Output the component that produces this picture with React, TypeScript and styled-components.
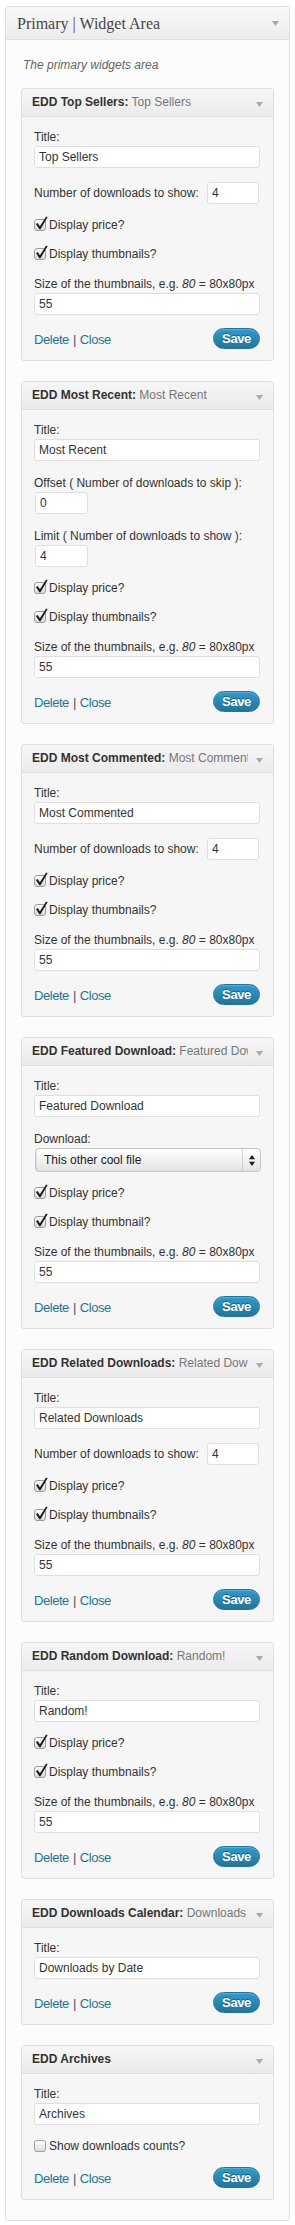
import React from "react";
import styled, { createGlobalStyle } from "styled-components";

const GlobalStyle = createGlobalStyle`
  html, body { margin: 0; padding: 0; background: #ffffff; }
  body {
    font-family: "Liberation Sans", Arial, Helvetica, sans-serif;
    font-size: 12px;
    color: #333333;
  }
  * { box-sizing: border-box; }
`;

type FieldDef =
  | { kind: "text"; label: string; value: string }
  | { kind: "inline"; label: string; value: string }
  | { kind: "small"; label: string; value: string }
  | { kind: "select"; label: string; value: string }
  | { kind: "check"; label: string; checked: boolean }
  | { kind: "size"; value: string };

interface WidgetDef {
  name: string;
  title?: string;
  fields: FieldDef[];
}

const widgets: WidgetDef[] = [
  {
    name: "EDD Top Sellers",
    title: "Top Sellers",
    fields: [
      { kind: "text", label: "Title:", value: "Top Sellers" },
      { kind: "inline", label: "Number of downloads to show:", value: "4" },
      { kind: "check", label: "Display price?", checked: true },
      { kind: "check", label: "Display thumbnails?", checked: true },
      { kind: "size", value: "55" },
    ],
  },
  {
    name: "EDD Most Recent",
    title: "Most Recent",
    fields: [
      { kind: "text", label: "Title:", value: "Most Recent" },
      { kind: "small", label: "Offset ( Number of downloads to skip ):", value: "0" },
      { kind: "small", label: "Limit ( Number of downloads to show ):", value: "4" },
      { kind: "check", label: "Display price?", checked: true },
      { kind: "check", label: "Display thumbnails?", checked: true },
      { kind: "size", value: "55" },
    ],
  },
  {
    name: "EDD Most Commented",
    title: "Most Commented",
    fields: [
      { kind: "text", label: "Title:", value: "Most Commented" },
      { kind: "inline", label: "Number of downloads to show:", value: "4" },
      { kind: "check", label: "Display price?", checked: true },
      { kind: "check", label: "Display thumbnails?", checked: true },
      { kind: "size", value: "55" },
    ],
  },
  {
    name: "EDD Featured Download",
    title: "Featured Download",
    fields: [
      { kind: "text", label: "Title:", value: "Featured Download" },
      { kind: "select", label: "Download:", value: "This other cool file" },
      { kind: "check", label: "Display price?", checked: true },
      { kind: "check", label: "Display thumbnail?", checked: true },
      { kind: "size", value: "55" },
    ],
  },
  {
    name: "EDD Related Downloads",
    title: "Related Downloads",
    fields: [
      { kind: "text", label: "Title:", value: "Related Downloads" },
      { kind: "inline", label: "Number of downloads to show:", value: "4" },
      { kind: "check", label: "Display price?", checked: true },
      { kind: "check", label: "Display thumbnails?", checked: true },
      { kind: "size", value: "55" },
    ],
  },
  {
    name: "EDD Random Download",
    title: "Random!",
    fields: [
      { kind: "text", label: "Title:", value: "Random!" },
      { kind: "check", label: "Display price?", checked: true },
      { kind: "check", label: "Display thumbnails?", checked: true },
      { kind: "size", value: "55" },
    ],
  },
  {
    name: "EDD Downloads Calendar",
    title: "Downloads by Date",
    fields: [{ kind: "text", label: "Title:", value: "Downloads by Date" }],
  },
  {
    name: "EDD Archives",
    fields: [
      { kind: "text", label: "Title:", value: "Archives" },
      { kind: "check", label: "Show downloads counts?", checked: false },
    ],
  },
];

/* ---------- layout ---------- */

const Page = styled.div`
  padding: 6px 5px 5px 5px;
`;

const Panel = styled.section`
  border: 1px solid #dfdfdf;
  border-radius: 3px;
  background: #fcfcfc;
  overflow: hidden;
`;

const PanelHeader = styled.div`
  height: 33px;
  display: flex;
  align-items: center;
  justify-content: space-between;
  padding: 0 10px 0 11px;
  border-bottom: 1px solid #dfdfdf;
  background: linear-gradient(to bottom, #f9f9f9, #ececec);
`;

const PanelTitle = styled.h3`
  margin: 0;
  padding-top: 1px;
  font-family: "Liberation Serif", "Times New Roman", serif;
  font-weight: normal;
  font-size: 16px;
  line-height: 31px;
  color: #464646;
`;

const PanelBody = styled.div`
  padding: 17px 15px 20px 15px;
`;

const Description = styled.p`
  margin: 0 0 15px 2px;
  font-style: italic;
  font-size: 12px;
  line-height: 16px;
  color: #666666;
`;

const WidgetList = styled.div`
  display: flex;
  flex-direction: column;
  gap: 20px;
`;

const Widget = styled.div`
  border: 1px solid #dfdfdf;
  border-radius: 3px;
  background: #f6f6f6;
  overflow: hidden;
`;

const WidgetTop = styled.div`
  height: 28px;
  display: flex;
  align-items: center;
  padding: 0 10px 0 10px;
  border-bottom: 1px solid #dfdfdf;
  background: linear-gradient(to bottom, #f6f6f6, #ebebeb);
`;

const WidgetTitle = styled.h4`
  flex: 1;
  min-width: 0;
  margin: 0;
  overflow: hidden;
  white-space: nowrap;
  font-size: 12px;
  line-height: 27px;
  font-weight: bold;
  color: #333333;
`;

const InTitle = styled.span`
  font-weight: normal;
  color: #777777;
`;

const ToggleArrow = styled.svg<{ $offset: number }>`
  flex: none;
  margin-left: 8px;
  margin-top: ${(p) => p.$offset}px;
`;

const WidgetInside = styled.div`
  display: flex;
  flex-direction: column;
  gap: 13px;
  padding: 11px 13px 11px 12px;
`;

const Field = styled.div`
  display: flex;
  flex-direction: column;
  align-items: flex-start;
`;

const Label = styled.label`
  display: block;
  line-height: 18px;
  white-space: nowrap;
  color: #333333;
`;

const TextInput = styled.input<{ $width?: number; $indent?: number }>`
  display: block;
  width: ${(p) => (p.$width ? `${p.$width}px` : "100%")};
  margin-left: ${(p) => p.$indent ?? 0}px;
  height: 22px;
  padding: 0 4px;
  border: 1px solid #dfdfdf;
  border-radius: 3px;
  background: #ffffff;
  font-family: inherit;
  font-size: 12px;
  color: #333333;
  outline: none;
`;

const InlineRow = styled.div`
  height: 23px;
  display: flex;
  align-items: center;
  justify-content: space-between;
  padding-right: 1px;
`;

const CheckRow = styled.label`
  height: 16px;
  display: flex;
  align-items: center;
  color: #333333;
  line-height: 16px;
`;

const CheckSvg = styled.svg`
  flex: none;
  overflow: visible;
`;

const SelectBox = styled.div`
  width: 226px;
  height: 24px;
  margin-left: 1px;
  display: flex;
  align-items: stretch;
  border: 1px solid #c6c6c6;
  border-radius: 4px;
  background: linear-gradient(to bottom, #ffffff 0%, #f3f3f3 45%, #e3e3e3 100%);
  box-shadow: inset 1px 0 1px rgba(0, 0, 0, 0.08);
`;

const SelectText = styled.span`
  flex: 1;
  padding-left: 8px;
  line-height: 22px;
  color: #222222;
`;

const SelectArrows = styled.span`
  flex: none;
  width: 18px;
  display: flex;
  align-items: center;
  justify-content: center;
  border-left: 1px solid #d0d0d0;
`;

const Footer = styled.div`
  display: flex;
  justify-content: space-between;
  align-items: flex-start;
`;

const Links = styled.div`
  padding-top: 4px;
  font-size: 13px;
  line-height: 16px;
  letter-spacing: -0.45px;
  color: #333333;
`;

const Link = styled.a`
  color: #21759b;
  text-decoration: none;
`;

const Sep = styled.span`
  margin: 0 4px;
  color: #555555;
`;

const SaveButton = styled.button`
  width: 47px;
  height: 21px;
  padding: 0;
  border: 1px solid #21759b;
  border-radius: 11px;
  background: linear-gradient(to bottom, #2e9bcd, #21759b);
  color: #ffffff;
  font-family: inherit;
  font-weight: bold;
  font-size: 13px;
  letter-spacing: -0.4px;
  line-height: 19px;
  text-shadow: 0 -1px 0 rgba(0, 0, 0, 0.35);
  box-shadow: inset 0 1px 0 rgba(120, 200, 230, 0.5);
  cursor: pointer;
`;

/* ---------- icons ---------- */

const Arrow = ({ offset }: { offset: number }) => (
  <ToggleArrow $offset={offset} width="7" height="5" viewBox="0 0 7 5" aria-hidden="true">
    <polygon points="0,0 7,0 3.5,5" fill="#a9a9a9" />
  </ToggleArrow>
);

const CheckBox = ({ checked }: { checked: boolean }) => (
  <CheckSvg width="15" height="16" viewBox="0 0 15 16" aria-hidden="true">
    <defs>
      <linearGradient id="cbFill" x1="0" y1="0" x2="0" y2="1">
        <stop offset="0" stopColor="#fefefe" />
        <stop offset="1" stopColor="#d9d9d9" />
      </linearGradient>
    </defs>
    <rect x="0.5" y="2.5" width="11" height="11" rx="2.5" fill="url(#cbFill)" stroke="#9d9d9d" />
    {checked && (
      <path
        d="M1.9 6.9 L3.7 6 L5.9 9.3 L12.1 -0.6 L13.6 0.3 L6.5 12.3 L5.3 12.3 Z"
        fill="#1f1f1f"
      />
    )}
  </CheckSvg>
);

const UpDown = () => (
  <svg width="6" height="11" viewBox="0 0 6 11" aria-hidden="true">
    <polygon points="0,4.3 3,0 6,4.3" fill="#1a1a1a" />
    <polygon points="0,6.7 3,11 6,6.7" fill="#1a1a1a" />
  </svg>
);

/* ---------- rendering ---------- */

const renderField = (f: FieldDef, i: number) => {
  switch (f.kind) {
    case "text":
      return (
        <Field key={i}>
          <Label>{f.label}</Label>
          <TextInput readOnly value={f.value} />
        </Field>
      );
    case "inline":
      return (
        <InlineRow key={i}>
          <Label>{f.label}</Label>
          <TextInput readOnly $width={52} value={f.value} />
        </InlineRow>
      );
    case "small":
      return (
        <Field key={i}>
          <Label>{f.label}</Label>
          <TextInput readOnly $width={53} $indent={1} value={f.value} />
        </Field>
      );
    case "select":
      return (
        <Field key={i}>
          <Label>{f.label}</Label>
          <SelectBox role="combobox">
            <SelectText>{f.value}</SelectText>
            <SelectArrows>
              <UpDown />
            </SelectArrows>
          </SelectBox>
        </Field>
      );
    case "check":
      return (
        <CheckRow key={i}>
          <CheckBox checked={f.checked} />
          {f.label}
        </CheckRow>
      );
    case "size":
      return (
        <Field key={i}>
          <Label>
            Size of the thumbnails, e.g. <em>80</em> = 80x80px
          </Label>
          <TextInput readOnly value={f.value} />
        </Field>
      );
  }
};

export default function App() {
  return (
    <>
      <GlobalStyle />
      <Page>
        <Panel>
          <PanelHeader>
            <PanelTitle>Primary | Widget Area</PanelTitle>
            <Arrow offset={1} />
          </PanelHeader>
          <PanelBody>
            <Description>The primary widgets area</Description>
            <WidgetList>
              {widgets.map((w) => (
                <Widget key={w.name}>
                  <WidgetTop>
                    <WidgetTitle>
                      {w.name}
                      {w.title ? ":" : ""}
                      {w.title && <InTitle> {w.title}</InTitle>}
                    </WidgetTitle>
                    <Arrow offset={3} />
                  </WidgetTop>
                  <WidgetInside>
                    {w.fields.map(renderField)}
                    <Footer>
                      <Links>
                        <Link href="#delete">Delete</Link>
                        <Sep>|</Sep>
                        <Link href="#close">Close</Link>
                      </Links>
                      <SaveButton type="button">Save</SaveButton>
                    </Footer>
                  </WidgetInside>
                </Widget>
              ))}
            </WidgetList>
          </PanelBody>
        </Panel>
      </Page>
    </>
  );
}
